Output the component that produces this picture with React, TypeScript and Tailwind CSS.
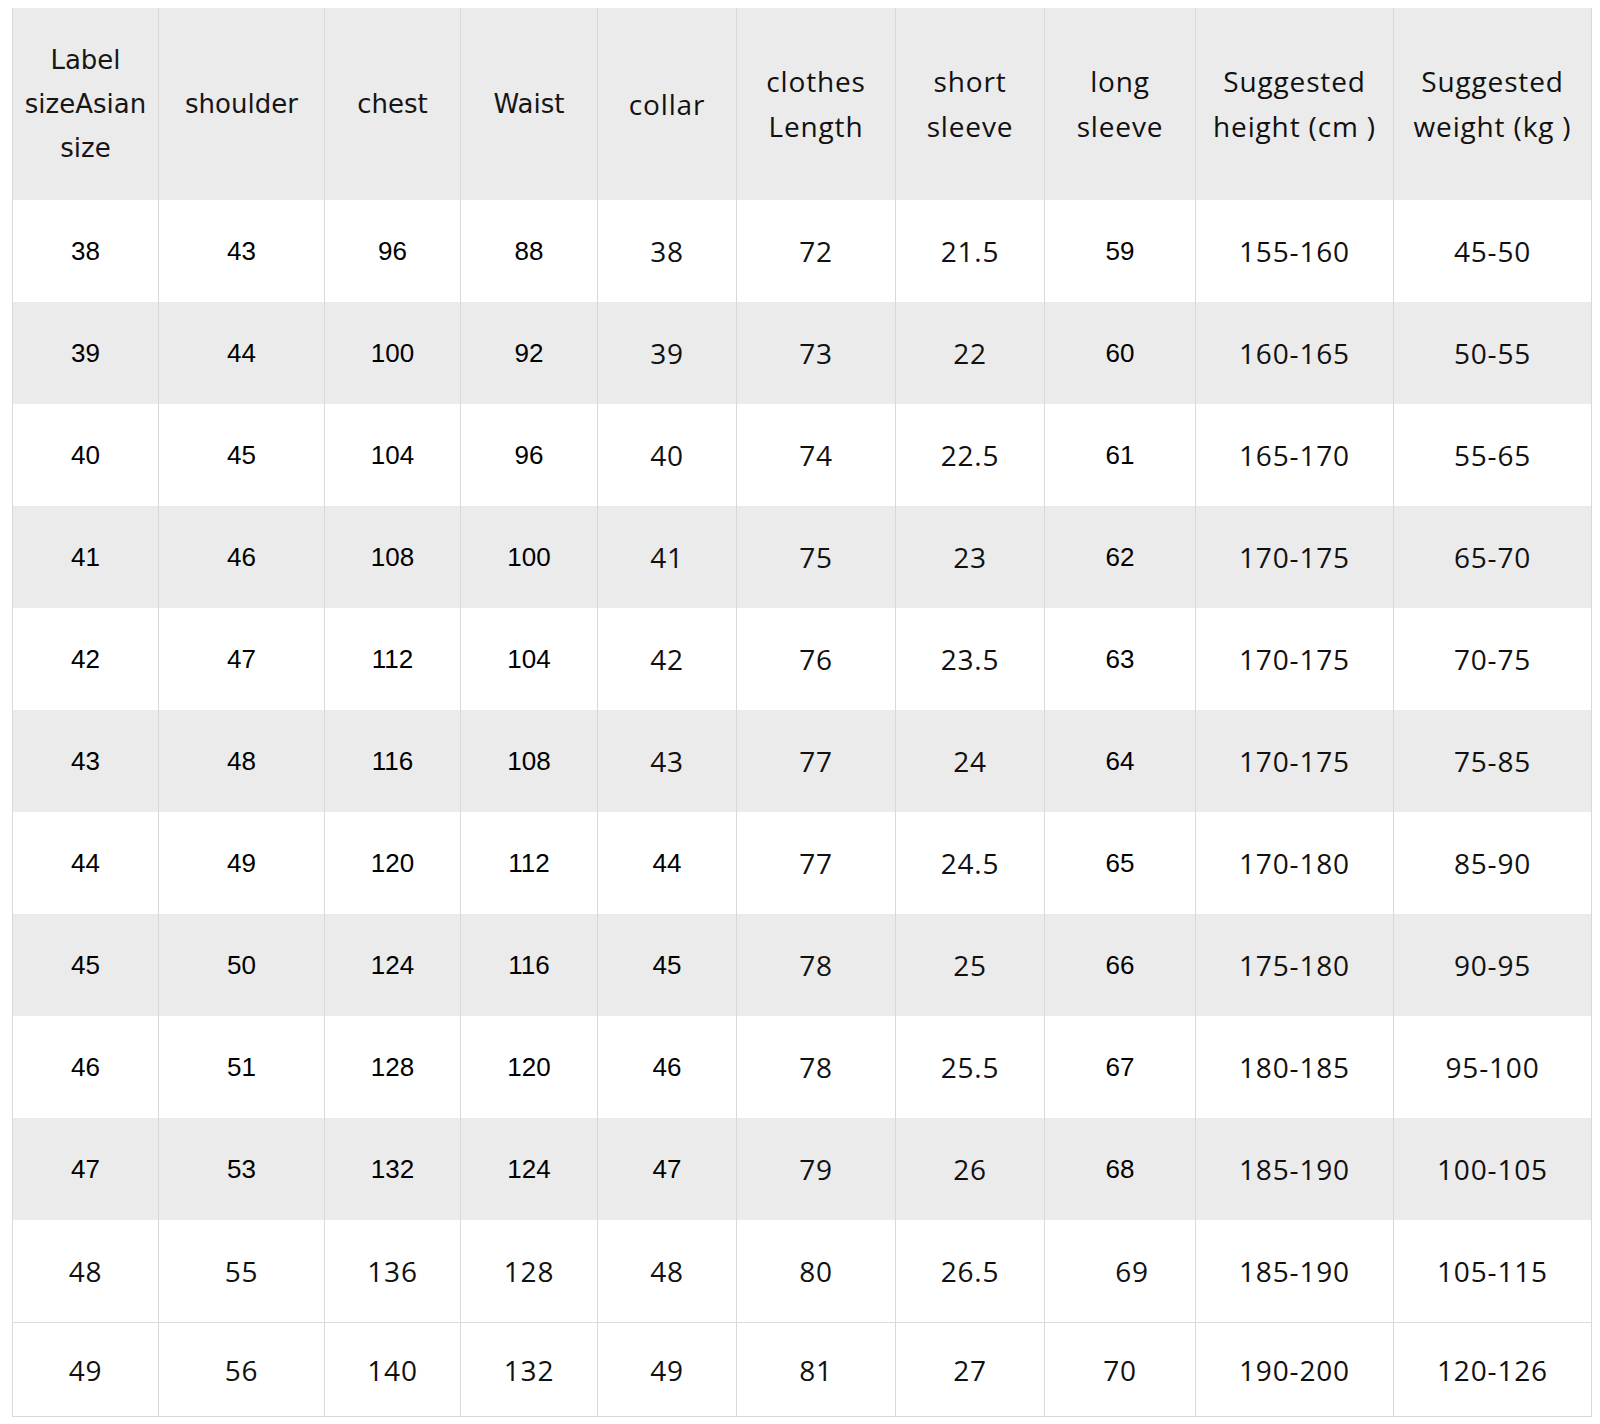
import React from 'react';

const COLS = [
  'w-[147px]', 'w-[166px]', 'w-[136px]', 'w-[137px]', 'w-[139px]',
  'w-[159px]', 'w-[149px]', 'w-[151px]', 'w-[198px]', 'w-[198px]',
];

const HEADERS: { lines: string[]; verdana?: boolean }[] = [
  { lines: ['Label', 'sizeAsian', 'size'], verdana: true },
  { lines: ['shoulder'], verdana: true },
  { lines: ['chest'], verdana: true },
  { lines: ['Waist'], verdana: true },
  { lines: ['collar'] },
  { lines: ['clothes', 'Length'] },
  { lines: ['short', 'sleeve'] },
  { lines: ['long', 'sleeve'] },
  { lines: ['Suggested', 'height (cm )'] },
  { lines: ['Suggested', 'weight (kg )'] },
];

const ROWS = [
  ['38', '43', '96', '88', '38', '72', '21.5', '59', '155-160', '45-50'],
  ['39', '44', '100', '92', '39', '73', '22', '60', '160-165', '50-55'],
  ['40', '45', '104', '96', '40', '74', '22.5', '61', '165-170', '55-65'],
  ['41', '46', '108', '100', '41', '75', '23', '62', '170-175', '65-70'],
  ['42', '47', '112', '104', '42', '76', '23.5', '63', '170-175', '70-75'],
  ['43', '48', '116', '108', '43', '77', '24', '64', '170-175', '75-85'],
  ['44', '49', '120', '112', '44', '77', '24.5', '65', '170-180', '85-90'],
  ['45', '50', '124', '116', '45', '78', '25', '66', '175-180', '90-95'],
  ['46', '51', '128', '120', '46', '78', '25.5', '67', '180-185', '95-100'],
  ['47', '53', '132', '124', '47', '79', '26', '68', '185-190', '100-105'],
  ['48', '55', '136', '128', '48', '80', '26.5', '69', '185-190', '105-115'],
  ['49', '56', '140', '132', '49', '81', '27', '70', '190-200', '120-126'],
];

// arial-like cells in the scanned chart; the rest read like segoe
const isArial = (r: number, c: number) => {
  if (r >= 10) return false;
  if (c <= 3 || c === 7) return true;
  if (c === 4 && r >= 6) return true;
  return false;
};

const rowBg = (r: number) => (r < 10 && r % 2 === 1 ? 'bg-[#ebebeb]' : 'bg-white');

export default function App() {
  return (
    <div className="min-h-[1424px] w-[1600px] bg-white pl-[12px] pt-[8px] text-[#111111]">
      <div className="flex w-fit flex-col border-b border-[#d9d9d9]">
        {/* header */}
        <div className="flex h-[192px] bg-[#ebebeb]">
          {HEADERS.map((h, i) => (
            <div
              key={i}
              className={`${COLS[i]} flex shrink-0 flex-col items-center justify-center border-r border-[#d9d9d9] text-center ${
                i === 0 ? 'border-l' : ''
              } ${
                h.verdana
                  ? "font-['DejaVu_Sans',sans-serif] text-[26px] leading-[44px] text-[#161616]"
                  : "font-['Open_Sans',sans-serif] text-[28px] font-medium leading-[45px] tracking-[0.03em]"
              }`}
            >
              {h.lines.map((l, j) => (
                <span key={j} className="whitespace-pre">{l}</span>
              ))}
            </div>
          ))}
        </div>

        {/* body */}
        {ROWS.map((row, r) => (
          <div
            key={r}
            className={`flex ${r === 11 ? 'h-[94px]' : 'h-[102px]'} ${rowBg(r)} ${
              r === 11 ? 'border-t border-[#dcdcdc]' : ''
            }`}
          >
            {row.map((v, c) => (
              <div
                key={c}
                className={`${COLS[c]} flex shrink-0 items-center justify-center border-r border-[#d9d9d9] ${
                  c === 0 ? 'border-l' : ''
                } ${r === 10 && c === 7 ? 'pl-[24px]' : ''} ${
                  isArial(r, c)
                    ? "font-['Liberation_Sans',Arial,sans-serif] text-[26px] text-black"
                    : "font-['Open_Sans',sans-serif] text-[28px] font-medium tracking-[0.03em]"
                }`}
              >
                {v}
              </div>
            ))}
          </div>
        ))}
      </div>
    </div>
  );
}
